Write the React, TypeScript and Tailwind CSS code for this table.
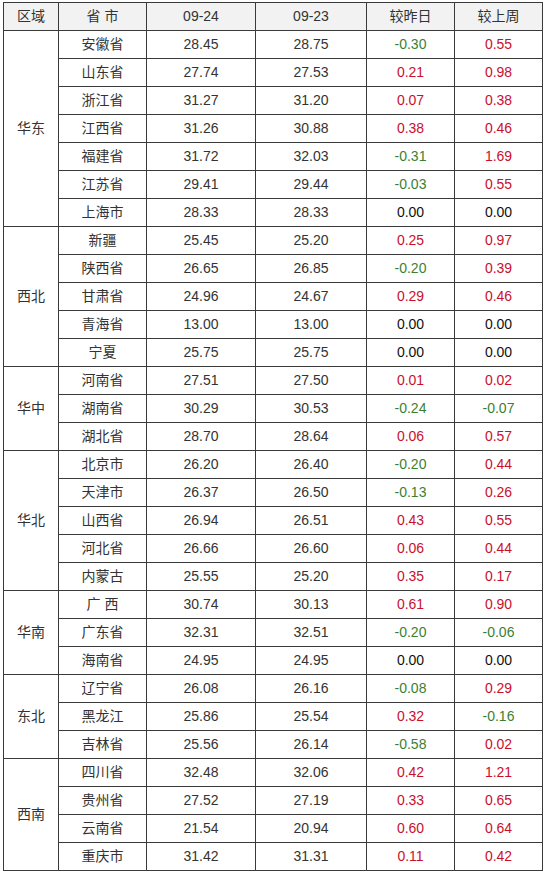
type Row = { prov: string; a: string; b: string; d: string; w: string };
type Group = { region: string; rows: Row[] };

const groups: Group[] = [
  {
    region: "华东",
    rows: [
      { prov: "安徽省", a: "28.45", b: "28.75", d: "-0.30", w: "0.55" },
      { prov: "山东省", a: "27.74", b: "27.53", d: "0.21", w: "0.98" },
      { prov: "浙江省", a: "31.27", b: "31.20", d: "0.07", w: "0.38" },
      { prov: "江西省", a: "31.26", b: "30.88", d: "0.38", w: "0.46" },
      { prov: "福建省", a: "31.72", b: "32.03", d: "-0.31", w: "1.69" },
      { prov: "江苏省", a: "29.41", b: "29.44", d: "-0.03", w: "0.55" },
      { prov: "上海市", a: "28.33", b: "28.33", d: "0.00", w: "0.00" },
    ],
  },
  {
    region: "西北",
    rows: [
      { prov: "新疆", a: "25.45", b: "25.20", d: "0.25", w: "0.97" },
      { prov: "陕西省", a: "26.65", b: "26.85", d: "-0.20", w: "0.39" },
      { prov: "甘肃省", a: "24.96", b: "24.67", d: "0.29", w: "0.46" },
      { prov: "青海省", a: "13.00", b: "13.00", d: "0.00", w: "0.00" },
      { prov: "宁夏", a: "25.75", b: "25.75", d: "0.00", w: "0.00" },
    ],
  },
  {
    region: "华中",
    rows: [
      { prov: "河南省", a: "27.51", b: "27.50", d: "0.01", w: "0.02" },
      { prov: "湖南省", a: "30.29", b: "30.53", d: "-0.24", w: "-0.07" },
      { prov: "湖北省", a: "28.70", b: "28.64", d: "0.06", w: "0.57" },
    ],
  },
  {
    region: "华北",
    rows: [
      { prov: "北京市", a: "26.20", b: "26.40", d: "-0.20", w: "0.44" },
      { prov: "天津市", a: "26.37", b: "26.50", d: "-0.13", w: "0.26" },
      { prov: "山西省", a: "26.94", b: "26.51", d: "0.43", w: "0.55" },
      { prov: "河北省", a: "26.66", b: "26.60", d: "0.06", w: "0.44" },
      { prov: "内蒙古", a: "25.55", b: "25.20", d: "0.35", w: "0.17" },
    ],
  },
  {
    region: "华南",
    rows: [
      { prov: "广 西", a: "30.74", b: "30.13", d: "0.61", w: "0.90" },
      { prov: "广东省", a: "32.31", b: "32.51", d: "-0.20", w: "-0.06" },
      { prov: "海南省", a: "24.95", b: "24.95", d: "0.00", w: "0.00" },
    ],
  },
  {
    region: "东北",
    rows: [
      { prov: "辽宁省", a: "26.08", b: "26.16", d: "-0.08", w: "0.29" },
      { prov: "黑龙江", a: "25.86", b: "25.54", d: "0.32", w: "-0.16" },
      { prov: "吉林省", a: "25.56", b: "26.14", d: "-0.58", w: "0.02" },
    ],
  },
  {
    region: "西南",
    rows: [
      { prov: "四川省", a: "32.48", b: "32.06", d: "0.42", w: "1.21" },
      { prov: "贵州省", a: "27.52", b: "27.19", d: "0.33", w: "0.65" },
      { prov: "云南省", a: "21.54", b: "20.94", d: "0.60", w: "0.64" },
      { prov: "重庆市", a: "31.42", b: "31.31", d: "0.11", w: "0.42" },
    ],
  },
];

// 涨跌颜色：负数绿，正数红，持平黑
function changeClass(v: string) {
  if (v.startsWith("-")) return "text-[#3c7f34]";
  if (v === "0.00") return "text-[#111111]";
  return "text-[#c8102e]";
}

const cell = "border border-[#3a3a3a] h-[28px] p-0 text-center align-middle";

export default function App() {
  return (
    <div
      className="bg-white pl-[3px] pt-[2px] text-[14px] text-[#333333]"
      style={{ fontFamily: '"Liberation Sans", "Noto Sans CJK SC", sans-serif' }}
    >
      <table className="border-collapse table-fixed w-[539px]">
        <colgroup>
          <col className="w-[55px]" />
          <col className="w-[88px]" />
          <col className="w-[109px]" />
          <col className="w-[111px]" />
          <col className="w-[88px]" />
          <col className="w-[88px]" />
        </colgroup>
        <thead>
          <tr className="bg-[#f2f2f2]">
            <th className={`${cell} font-normal`}>区域</th>
            <th className={`${cell} font-normal`}>省 市</th>
            <th className={`${cell} font-normal`}>09-24</th>
            <th className={`${cell} font-normal`}>09-23</th>
            <th className={`${cell} font-normal`}>较昨日</th>
            <th className={`${cell} font-normal`}>较上周</th>
          </tr>
        </thead>
        <tbody>
          {groups.map((g) =>
            g.rows.map((r, i) => (
              <tr key={g.region + r.prov}>
                {i === 0 && (
                  <td className={cell} rowSpan={g.rows.length}>
                    {g.region}
                  </td>
                )}
                <td className={cell}>{r.prov}</td>
                <td className={cell}>{r.a}</td>
                <td className={cell}>{r.b}</td>
                <td className={`${cell} ${changeClass(r.d)}`}>{r.d}</td>
                <td className={`${cell} ${changeClass(r.w)}`}>{r.w}</td>
              </tr>
            ))
          )}
        </tbody>
      </table>
    </div>
  );
}
